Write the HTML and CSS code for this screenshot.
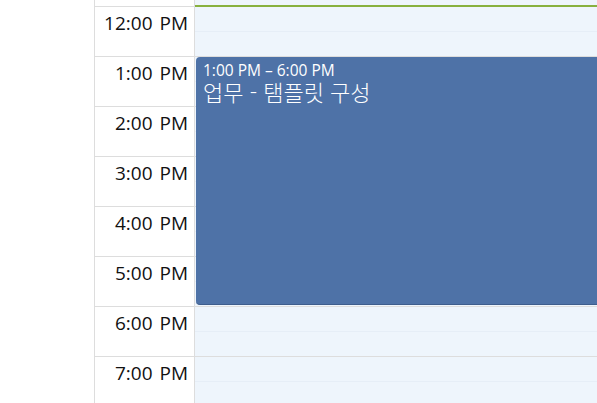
FILE: index.html
```html
<!DOCTYPE html>
<html lang="ko">
<head>
<meta charset="utf-8">
<link rel="stylesheet" href="styles.css">
</head>
<body>
<div class="cal">
  <div class="gutter"></div>
  <div class="times">
    <div class="top"></div>
    <div class="slot"><span>12:00 PM</span></div>
    <div class="slot"><span>1:00 PM</span></div>
    <div class="slot"><span>2:00 PM</span></div>
    <div class="slot"><span>3:00 PM</span></div>
    <div class="slot"><span>4:00 PM</span></div>
    <div class="slot"><span>5:00 PM</span></div>
    <div class="slot"><span>6:00 PM</span></div>
    <div class="slot"><span>7:00 PM</span></div>
  </div>
  <div class="day">
    <div class="top"></div>
    <div class="dslot"></div>
    <div class="dslot"></div>
    <div class="dslot"></div>
    <div class="dslot"></div>
    <div class="dslot"></div>
    <div class="dslot"></div>
    <div class="dslot"></div>
    <div class="dslot"></div>
    <div class="now"></div>
    <div class="event">
      <div class="ev-time">1:00 PM – 6:00 PM</div>
      <div class="ev-title">업무 - 탬플릿 구성</div>
    </div>
  </div>
</div>
</body>
</html>
```
FILE: styles.css
```css
html, body {
  margin: 0;
  padding: 0;
  background: #fff;
}
.cal {
  display: flex;
  height: 403px;
  overflow: hidden;
  font-family: "Open Sans", "Noto Sans CJK KR", sans-serif;
}
.gutter {
  width: 94px;
  border-right: 1px solid #ddd;
  flex: none;
}
.times {
  width: 99px;
  border-right: 1px solid #ddd;
  flex: none;
}
.top {
  height: 6px;
}
.slot {
  height: 49px;
  border-top: 1px solid #ddd;
  text-align: right;
  padding-right: 6px;
  font-size: 19px;
  line-height: 24px;
  word-spacing: 2px;
  color: #111;
}
.slot span {
  display: block;
  padding-top: 4px;
}
.day {
  flex: 1;
  position: relative;
  background: #eef5fc;
}
.dslot {
  height: 49px;
  border-top: 1px solid #ddd;
  background: linear-gradient(to bottom, transparent 24px, #e6eef7 24px, #e6eef7 25px, transparent 25px);
}
.now {
  position: absolute;
  left: 0;
  right: 0;
  top: 5px;
  height: 2px;
  background: #88b13f;
}
.event {
  position: absolute;
  top: 57px;
  left: 1px;
  right: -10px;
  height: 248px;
  background: #4e72a7;
  border-bottom: 1px solid #3e5d8c;
  border-radius: 4px;
  color: #fff;
  padding: 4px 7px;
  box-sizing: border-box;
}
.ev-time {
  font-size: 15.5px;
  line-height: 19px;
}
.ev-title {
  font-family: "Noto Sans CJK KR", sans-serif;
  font-size: 22px;
  line-height: 23px;
  font-weight: 300;
}
```
